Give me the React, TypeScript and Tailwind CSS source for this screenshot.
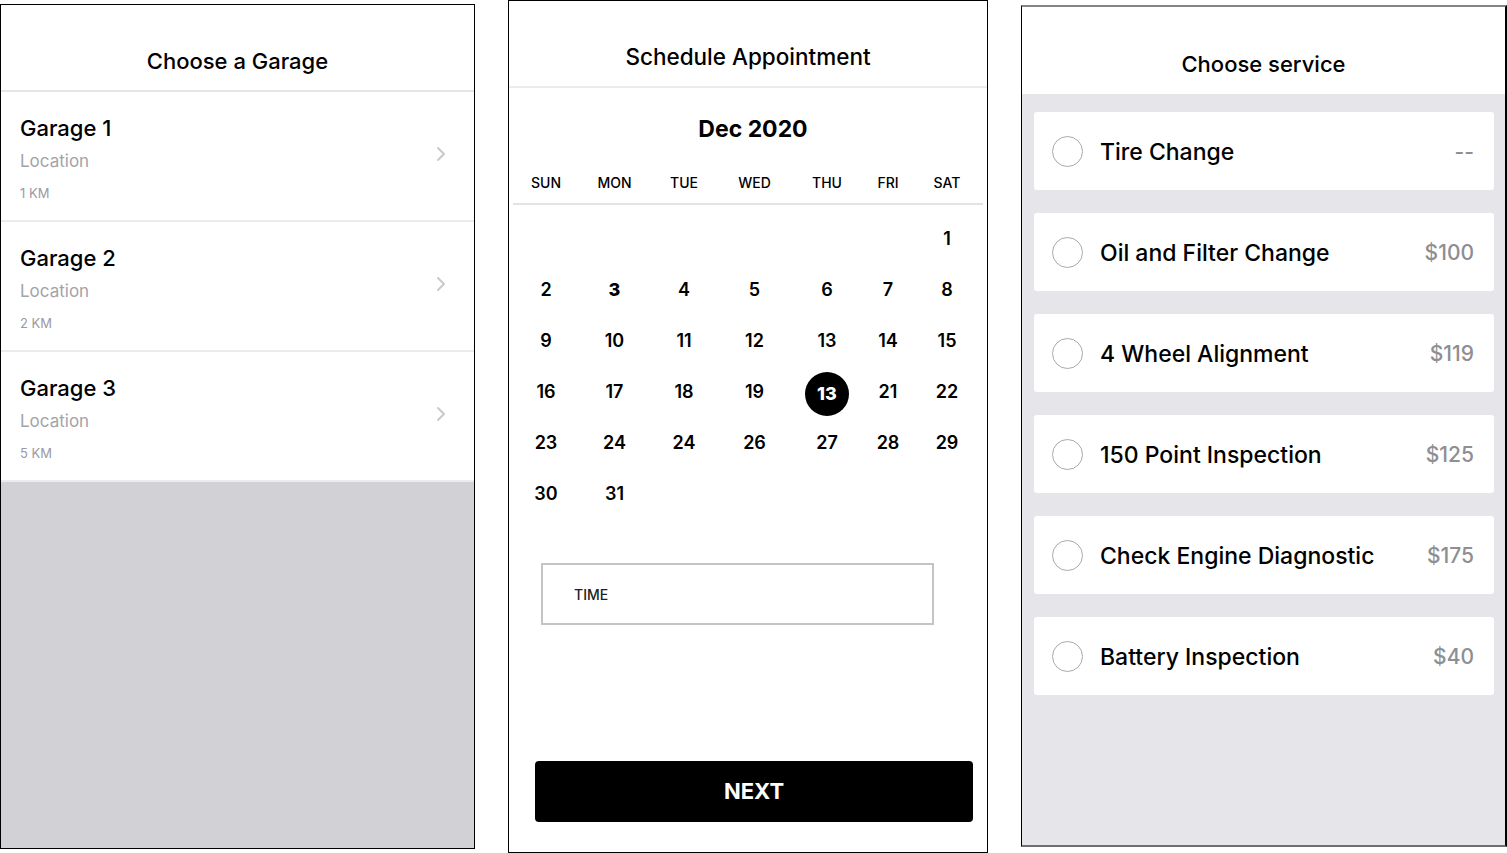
const garages = [
  { name: "Garage 1", dist: "1 KM" },
  { name: "Garage 2", dist: "2 KM" },
  { name: "Garage 3", dist: "5 KM" },
];

const days = ["SUN", "MON", "TUE", "WED", "THU", "FRI", "SAT"];

const weeks: (string | null)[][] = [
  [null, null, null, null, null, null, "1"],
  ["2", "3", "4", "5", "6", "7", "8"],
  ["9", "10", "11", "12", "13", "14", "15"],
  ["16", "17", "18", "19", "13", "21", "22"],
  ["23", "24", "24", "26", "27", "28", "29"],
  ["30", "31", null, null, null, null, null],
];

const services = [
  { name: "Tire Change", price: "--" },
  { name: "Oil and Filter Change", price: "$100" },
  { name: "4 Wheel Alignment", price: "$119" },
  { name: "150 Point Inspection", price: "$125" },
  { name: "Check Engine Diagnostic", price: "$175" },
  { name: "Battery Inspection", price: "$40" },
];

const Chevron = () => (
  <svg width="10" height="16" viewBox="0 0 10 16" fill="none" className="mb-[4px]">
    <path d="M2 2l6 6-6 6" stroke="#c7c7cc" strokeWidth="1.8" strokeLinecap="round" strokeLinejoin="round" />
  </svg>
);

const GaragePanel = () => (
  <div className="mt-[4px] h-[845px] w-[475px] border border-black bg-[#d1d1d6] flex flex-col overflow-hidden">
    <div className="h-[87px] bg-white flex items-end justify-center pb-[12px] border-b-2 border-[#e5e5ea]">
      <h1 className="text-[22px] font-medium text-black">Choose a Garage</h1>
    </div>
    {garages.map((g) => (
      <div key={g.name} className="h-[130px] bg-white border-b-2 border-[#ececef] flex items-center justify-between pl-[19px] pr-[28px]">
        <div className="flex flex-col mt-[3px]">
          <span className="text-[22px] font-medium leading-[28px] text-black">{g.name}</span>
          <span className="text-[17px] leading-[22px] mt-[8px] text-[#a3a3a8]">Location</span>
          <span className="text-[13px] leading-[16px] mt-[13px] text-[#9a9a9f]">{g.dist}</span>
        </div>
        <Chevron />
      </div>
    ))}
  </div>
);

const SchedulePanel = () => (
  <div className="h-[853px] w-[480px] border border-black bg-white flex flex-col">
    <div className="h-[87px] flex items-end justify-center pb-[12px] border-b-2 border-[#ececef]">
      <h1 className="text-[22.5px] font-medium text-black">Schedule Appointment</h1>
    </div>
    <div className="pt-[27px] pl-[10px] text-center text-[23px] font-bold leading-[28px] text-black">Dec 2020</div>
    <div className="mx-[4px] mt-[31px] border-b-2 border-[#e3e3e3] pb-[11px]">
      <div className="grid grid-cols-[68px_69px_70px_71px_74px_48px_70px] ml-[-1px]">
        {days.map((d) => (
          <span key={d} className="text-center text-[14px] font-medium leading-[18px] text-black">{d}</span>
        ))}
      </div>
    </div>
    <div className="pt-[8px] ml-[3px]">
      {weeks.map((w, i) => (
        <div key={i} className="grid grid-cols-[68px_69px_70px_71px_74px_48px_70px] h-[51px] items-center">
          {w.map((d, j) => {
            const selected = i === 3 && j === 4;
            const bold = i === 1 && j === 1;
            return (
              <div key={j} className="flex justify-center items-center">
                {d && (selected ? (
                  <span className="w-[44px] h-[44px] rounded-full bg-black text-white flex items-center justify-center text-[18px] font-extrabold mt-[4px]">{d}</span>
                ) : (
                  <span className={`text-[18px] text-black ${bold ? "font-extrabold" : "font-semibold"}`}>{d}</span>
                ))}
              </div>
            );
          })}
        </div>
      ))}
    </div>
    <div className="mt-[44px] ml-[32px] w-[393px] h-[62px] border-2 border-[#c4c4c4] flex items-center pl-[31px]">
      <span className="text-[14px] font-medium text-[#222]">TIME</span>
    </div>
    <div className="flex-1" />
    <button className="ml-[26px] mr-[14px] mb-[30px] h-[61px] rounded-[4px] bg-black text-white text-[22px] font-bold">NEXT</button>
  </div>
);

const Radio = () => (
  <span className="w-[31px] h-[31px] rounded-full border-[1.5px] border-[#a9a9ad] bg-white shrink-0" />
);

const ServicePanel = () => (
  <div className="mt-[5px] h-[842px] w-[486px] border-t-2 border-l border-b-2 border-r-2 border-t-[#858585] border-b-[#6f6f6f] border-l-black border-r-black bg-[#e5e5ea] flex flex-col">
    <div className="h-[87px] bg-white flex items-end justify-center pb-[13px]">
      <h1 className="text-[22px] font-medium text-black">Choose service</h1>
    </div>
    <div className="flex flex-col gap-[23px] pt-[18px] pl-[12px] pr-[11px]">
      {services.map((s) => (
        <div key={s.name} className="h-[78px] bg-white rounded-[3px] flex items-center pl-[18px] pr-[20px]">
          <Radio />
          <span className="ml-[17px] mt-[2px] flex-1 text-[23px] font-medium text-black">{s.name}</span>
          <span className="mt-[2px] text-[21px] font-medium text-[#8e8e93]">{s.price}</span>
        </div>
      ))}
    </div>
  </div>
);

export default function App() {
  return (
    <div className="w-[1507px] h-[853px] bg-white flex items-start gap-[33px] overflow-hidden font-['Inter',sans-serif]">
      <GaragePanel />
      <SchedulePanel />
      <ServicePanel />
    </div>
  );
}
